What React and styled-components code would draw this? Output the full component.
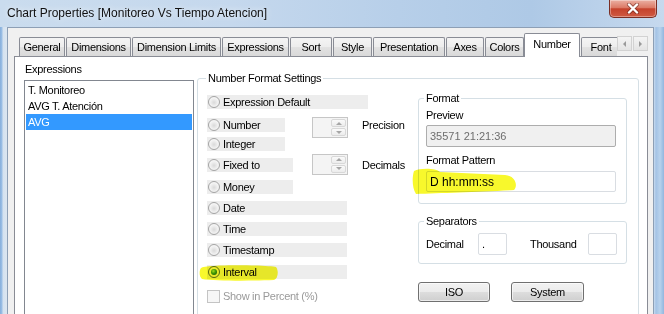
import styled, { createGlobalStyle } from 'styled-components';

const GlobalStyle = createGlobalStyle`
  html, body { margin: 0; padding: 0; }
  body {
    font-family: "Liberation Sans", Arial, sans-serif;
    font-size: 11px;
    letter-spacing: -0.3px;
    color: #000;
    background: #fff;
  }
  * { box-sizing: border-box; }
`;

const Window = styled.div`
  position: relative;
  width: 664px;
  height: 314px;
  overflow: hidden;
  display: flex;
  flex-direction: column;
  background: linear-gradient(to right, #86aedb 0, #9cc0e6 2px, #d5e2ef 3px, #dbe6f1 7px, #c8dbef 654px, #a4c3e5 656px, #b8d2ec 660px, #92b6de 664px);
`;

const TitleBar = styled.div`
  flex: none;
  height: 27px;
  display: flex;
  align-items: flex-start;
  background: linear-gradient(to right, #cadcee 0%, #c5d8ed 35%, #b7cfe9 60%, #aec9e6 80%, #c6d9ee 100%);
`;

const Title = styled.div`
  margin: 6px 0 0 7px;
  font-size: 12px;
  line-height: 14px;
  letter-spacing: 0;
  color: #111;
  text-shadow: 0 0 6px rgba(255, 255, 255, 0.9);
`;

const CloseButton = styled.div`
  margin-left: auto;
  margin-right: 7px;
  width: 48px;
  height: 18px;
  display: flex;
  align-items: center;
  justify-content: center;
  border: 1px solid #7a2e24;
  border-top: none;
  border-radius: 0 0 5px 5px;
  background: linear-gradient(#ebb0a3 0%, #dc7a66 45%, #c5422c 52%, #cf5a42 100%);
  box-shadow: inset 0 0 0 1px rgba(255, 255, 255, 0.35);
`;

const Client = styled.div`
  flex: 1;
  min-height: 0;
  margin: 0 10px 0 7px;
  padding: 0 5px 0 6px;
  display: flex;
  flex-direction: column;
  background: #f0f0f0;
  border: 1px solid #8d9fb5;
  border-bottom: none;
`;

const TabStrip = styled.div`
  position: relative;
  z-index: 1;
  flex: none;
  height: 29px;
  padding: 5px 0 0 5px;
  display: flex;
`;

const Tabs = styled.div`
  flex: 1;
  display: flex;
  align-items: flex-end;
  overflow: hidden;
`;

const Tab = styled.div`
  flex: none;
  width: ${(p) => p.$w}px;
  height: ${(p) => (p.$active ? 24 : 19)}px;
  margin-left: ${(p) => (p.$first || p.$active ? 0 : 1)}px;
  margin-bottom: ${(p) => (p.$active ? 0 : 1)}px;
  padding-top: ${(p) => (p.$active ? 3 : 2)}px;
  border: 1px solid #898c95;
  border-bottom: none;
  border-radius: 2px 2px 0 0;
  background: ${(p) => (p.$active
    ? '#fff'
    : 'linear-gradient(#f4f4f4 0%, #ededed 50%, #e2e2e2 51%, #d9d9d9 100%)')};
  text-align: center;
  line-height: 14px;
  white-space: nowrap;
`;

const Arrows = styled.div`
  flex: none;
  display: flex;
  gap: 1px;
  margin-top: 3px;
  height: 15px;
`;

const ArrowButton = styled.div`
  width: 15px;
  height: 15px;
  display: flex;
  align-items: center;
  justify-content: center;
  border: 1px solid #d2d2d2;
  background: linear-gradient(#f4f4f4, #e4e4e4);
  &::after {
    content: '';
    border-top: 3px solid transparent;
    border-bottom: 3px solid transparent;
    ${(p) => (p.$dir === 'left' ? 'border-right: 3px solid #9a9a9a;' : 'border-left: 3px solid #9a9a9a;')}
  }
`;

const Panel = styled.div`
  flex: 1;
  margin-top: -1px;
  padding: 6px 8px 0 9px;
  display: grid;
  grid-template-columns: 170px 1fr;
  column-gap: 3px;
  align-items: start;
  background: #fff;
  border: 1px solid #898c95;
  border-bottom: none;
`;

const Column = styled.div`
  display: flex;
  flex-direction: column;
`;

const Caption = styled.div`
  line-height: 13px;
  margin-left: ${(p) => p.$indent || 0}px;
  margin-top: ${(p) => p.$top || 0}px;
  color: ${(p) => (p.$muted ? '#9a9a9a' : '#000')};
  white-space: nowrap;
`;

const ListBox = styled.div`
  margin-top: 4px;
  height: 240px;
  padding: 1px;
  border: 1px solid #828790;
  background: #fff;
`;

const ListItem = styled.div`
  height: 16px;
  line-height: 16px;
  padding-left: 2px;
  background: ${(p) => (p.$selected ? '#3399ff' : 'transparent')};
  color: ${(p) => (p.$selected ? '#fff' : '#000')};
`;

const Group = styled.fieldset`
  margin: ${(p) => p.$top || 0}px 0 0 0;
  padding: ${(p) => p.$pad};
  min-width: 0;
  height: ${(p) => (p.$h ? `${p.$h}px` : 'auto')};
  border: 1px solid #d5dfe5;
  border-radius: 3px;
`;

const Legend = styled.legend`
  padding: 0 2px;
  margin-left: ${(p) => p.$shift || 0}px;
  line-height: 13px;
`;

const GroupBody = styled.div`
  display: grid;
  grid-template-columns: 1fr 209px;
  align-items: start;
`;

const FormatRow = styled.div`
  height: 21.25px;
  margin-left: 1px;
  display: grid;
  grid-template-columns: 91px 36px auto;
  column-gap: 14px;
  align-items: center;
`;

const OptionBox = styled.div`
  width: ${(p) => p.$w}px;
  height: 14px;
  padding-left: 1px;
  display: flex;
  align-items: center;
  background: #ededed;
  white-space: nowrap;
`;

const Radio = styled.span`
  flex: none;
  width: 12px;
  height: 12px;
  margin-right: 3px;
  border-radius: 50%;
  display: flex;
  align-items: center;
  justify-content: center;
  border: 1px solid ${(p) => (p.$checked ? '#5a6a55' : '#a4a4a4')};
  background: radial-gradient(circle at 50% 55%, #d9d9d9 0, #eeeeee 45%, #fafafa 80%);
  &::after {
    content: '';
    display: ${(p) => (p.$checked ? 'block' : 'none')};
    width: 6px;
    height: 6px;
    border-radius: 50%;
    background: radial-gradient(circle at 40% 35%, #a6e07f 0, #3c9a1c 45%, #134f06 100%);
  }
`;

const Spinner = styled.div`
  align-self: start;
  margin-top: ${(p) => p.$top}px;
  width: 36px;
  height: 21px;
  display: flex;
  justify-content: flex-end;
  padding: 1px;
  border: 1px solid #c6c6c6;
  background: #f4f4f4;
`;

const SpinButtons = styled.div`
  width: 15px;
  display: flex;
  flex-direction: column;
  gap: 1px;
`;

const SpinButton = styled.div`
  flex: 1;
  display: flex;
  align-items: center;
  justify-content: center;
  border: 1px solid #d8d8d8;
  border-radius: 2px;
  background: linear-gradient(#fafafa, #ececec);
  &::after {
    content: '';
    border-left: 3px solid transparent;
    border-right: 3px solid transparent;
    ${(p) => (p.$dir === 'up' ? 'border-bottom: 3px solid #a6a6a6;' : 'border-top: 3px solid #a6a6a6;')}
  }
`;

const CheckRow = styled.div`
  margin: 4px 0 0 1px;
  height: 21px;
  display: flex;
  align-items: center;
`;

const CheckBox = styled.span`
  width: 13px;
  height: 13px;
  margin-right: 3px;
  border: 1px solid #c4c4c4;
  background: #f6f6f6;
`;

const TextField = styled.div`
  margin-top: ${(p) => p.$top || 0}px;
  width: ${(p) => (p.$w ? `${p.$w}px` : '100%')};
  height: ${(p) => p.$h}px;
  padding-left: 3px;
  display: flex;
  align-items: center;
  border: 1px solid ${(p) => (p.$disabled ? '#adadad' : '#d9dde2')};
  border-radius: 2px;
  background: ${(p) => (p.$disabled ? '#f0f0f0' : '#fff')};
  color: ${(p) => (p.$disabled ? '#6d6d6d' : '#000')};
  font-size: ${(p) => p.$size || 11}px;
  letter-spacing: 0;
`;

const SeparatorRow = styled.div`
  display: flex;
  align-items: center;
  height: 22px;
`;

const SepLabel = styled.div`
  width: ${(p) => p.$w}px;
`;

const ButtonRow = styled.div`
  margin-top: 18px;
  display: flex;
  gap: 21px;
`;

const Button = styled.div`
  width: ${(p) => p.$w}px;
  height: 20px;
  display: flex;
  align-items: center;
  justify-content: center;
  border: 1px solid #707070;
  border-radius: 3px;
  background: linear-gradient(#f2f2f2 0%, #ebebeb 50%, #dddddd 51%, #cfcfcf 100%);
  box-shadow: inset 0 0 0 1px rgba(255, 255, 255, 0.6);
`;

const Highlights = styled.svg`
  position: absolute;
  left: 0;
  top: 0;
  pointer-events: none;
  mix-blend-mode: multiply;
`;

const tabs = [
  ['General', 46], ['Dimensions', 65], ['Dimension Limits', 89], ['Expressions', 67],
  ['Sort', 42], ['Style', 39], ['Presentation', 72], ['Axes', 38], ['Colors', 39],
  ['Number', 56, true], ['Font', 40],
];

const expressions = ['T. Monitoreo', 'AVG T. Atención', 'AVG'];

const formats = [
  { label: 'Expression Default', w: 161 },
  { label: 'Number', w: 78, spin: 'Precision', top: 5 },
  { label: 'Integer', w: 78 },
  { label: 'Fixed to', w: 86, spin: 'Decimals', top: -1 },
  { label: 'Money', w: 86 },
  { label: 'Date', w: 140 },
  { label: 'Time', w: 140 },
  { label: 'Timestamp', w: 140 },
  { label: 'Interval', w: 140, checked: true },
];

export default function App() {
  return (
    <Window>
      <GlobalStyle />
      <TitleBar>
        <Title>Chart Properties [Monitoreo Vs Tiempo Atencion]</Title>
        <CloseButton>
          <svg width="14" height="11" viewBox="0 0 14 11">
            <path d="M3 1.5 L11 9.5 M11 1.5 L3 9.5" stroke="#5a1a12" strokeWidth="4" strokeLinecap="round" opacity="0.5" />
            <path d="M3 1.5 L11 9.5 M11 1.5 L3 9.5" stroke="#fff" strokeWidth="2.4" strokeLinecap="round" />
          </svg>
        </CloseButton>
      </TitleBar>
      <Client>
        <TabStrip>
          <Tabs>
            {tabs.map(([name, w, active], i) => (
              <Tab key={name} $w={w} $active={active} $first={i === 0}>{name}</Tab>
            ))}
          </Tabs>
          <Arrows>
            <ArrowButton $dir="left" />
            <ArrowButton $dir="right" />
          </Arrows>
        </TabStrip>
        <Panel>
          <Column>
            <Caption $indent={1}>Expressions</Caption>
            <ListBox>
              {expressions.map((e) => (
                <ListItem key={e} $selected={e === 'AVG'}>{e}</ListItem>
              ))}
            </ListBox>
          </Column>
          <Group $top={9} $pad="6px 11px 0 8px" $h={260}>
            <Legend>Number Format Settings</Legend>
            <GroupBody>
              <Column>
                {formats.map((f) => (
                  <FormatRow key={f.label}>
                    <OptionBox $w={f.w}>
                      <Radio $checked={f.checked} />
                      {f.label}
                    </OptionBox>
                    {f.spin && (
                      <Spinner $top={f.top}>
                        <SpinButtons>
                          <SpinButton $dir="up" />
                          <SpinButton $dir="down" />
                        </SpinButtons>
                      </Spinner>
                    )}
                    {f.spin && <Caption>{f.spin}</Caption>}
                  </FormatRow>
                ))}
                <CheckRow>
                  <CheckBox />
                  <Caption $muted>Show in Percent (%)</Caption>
                </CheckRow>
              </Column>
              <Column>
                <Group $top={1} $pad="4px 10px 11px 7px">
                  <Legend $shift={-2}>Format</Legend>
                  <Caption>Preview</Caption>
                  <TextField $top={3} $h={22} $disabled>35571 21:21:36</TextField>
                  <Caption $top={7}>Format Pattern</Caption>
                  <TextField $top={4} $h={21} $size={12}>D hh:mm:ss</TextField>
                </Group>
                <Group $top={11} $pad="5px 8px 8px 7px">
                  <Legend $shift={-2}>Separators</Legend>
                  <SeparatorRow>
                    <SepLabel $w={52}>Decimal</SepLabel>
                    <TextField $w={29} $h={22}>.</TextField>
                    <SepLabel $w={23} />
                    <SepLabel $w={58}>Thousand</SepLabel>
                    <TextField $w={29} $h={22} />
                  </SeparatorRow>
                </Group>
                <ButtonRow>
                  <Button $w={72}>ISO</Button>
                  <Button $w={73}>System</Button>
                </ButtonRow>
              </Column>
            </GroupBody>
          </Group>
        </Panel>
      </Client>
      <Highlights width="664" height="314" viewBox="0 0 664 314">
        <path d="M201 268 C205 264 270 265 276 267 C279 271 278 278 274 280 C250 281 215 281 202 279 C199 276 199 271 201 268 Z" fill="#f8f82c" />
        <path d="M414 171 C420 168 436 168 440 172 L505 175 C516 176 518 186 514 190 C480 192 440 193 416 194 C412 188 412 177 414 171 Z" fill="#f8f82c" />
      </Highlights>
    </Window>
  );
}
